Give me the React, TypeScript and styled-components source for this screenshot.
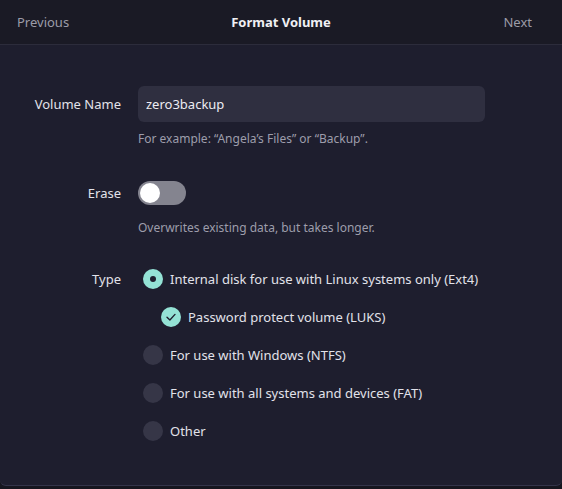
import styled, { createGlobalStyle } from "styled-components";
import React, { useState } from "react";

const GlobalStyle = createGlobalStyle`
  html, body {
    margin: 0;
    padding: 0;
    background: #16161f;
  }
  body {
    font-family: "Noto Sans", "Open Sans", sans-serif;
    -webkit-font-smoothing: antialiased;
  }
`;

const Window = styled.div`
  width: 562px;
  height: 486px;
  display: flex;
  flex-direction: column;
  background: #1e1e2e;
  border-bottom: 1px solid #34344a;
  border-radius: 0 0 6px 6px;
  box-sizing: border-box;
  overflow: hidden;
  color: #e2e2ea;
`;

const HeaderBar = styled.header`
  height: 45px;
  flex-shrink: 0;
  display: grid;
  grid-template-columns: 1fr auto 1fr;
  align-items: center;
  padding: 0 17px;
  background: #1a1a25;
  border-bottom: 1px solid #2c2c3b;
  box-sizing: border-box;
`;

const HeaderButton = styled.span<{ $end?: boolean }>`
  justify-self: ${(p) => (p.$end ? "end" : "start")};
  margin-right: ${(p) => (p.$end ? 13 : 0)}px;
  font-size: 13px;
  color: #9c9ca8;
`;

const Title = styled.h1`
  margin: 0;
  text-align: center;
  font-size: 13px;
  font-weight: 700;
  color: #f0f0f4;
`;

const Content = styled.div`
  display: grid;
  grid-template-columns: 121px 1fr;
  column-gap: 17px;
  padding: 41px 77px 0 0;
  align-items: start;
`;

const Label = styled.div<{ $h: number }>`
  height: ${(p) => p.$h}px;
  display: flex;
  align-items: center;
  justify-content: flex-end;
  font-size: 13px;
`;

const Field = styled.div<{ $mb?: number }>`
  display: flex;
  flex-direction: column;
  margin-bottom: ${(p) => p.$mb ?? 0}px;
`;

const Entry = styled.input`
  height: 36px;
  box-sizing: border-box;
  padding: 0 8px;
  border: 0;
  border-radius: 6px;
  background: #2f2f40;
  color: #ececf2;
  font: inherit;
  font-size: 13px;
  outline: none;
`;

const Hint = styled.div`
  margin-top: 8px;
  font-size: 12px;
  line-height: 17px;
  color: #9d9dab;
`;

const SwitchRow = styled.div`
  height: 36px;
  display: flex;
  align-items: center;
`;

const Switch = styled.button<{ $on: boolean }>`
  width: 48px;
  height: 24px;
  padding: 2px;
  border: 0;
  border-radius: 12px;
  background: ${(p) => (p.$on ? "#94e2d5" : "#84848f")};
  display: flex;
  justify-content: ${(p) => (p.$on ? "flex-end" : "flex-start")};
  cursor: pointer;
`;

const Knob = styled.span`
  width: 20px;
  height: 20px;
  border-radius: 50%;
  background: #ffffff;
`;

const Options = styled.div`
  display: flex;
  flex-direction: column;
`;

const Option = styled.label<{ $indent?: boolean }>`
  height: 38px;
  display: flex;
  align-items: center;
  gap: 7px;
  padding-left: ${(p) => (p.$indent ? 23 : 5)}px;
  font-size: 13px;
  cursor: pointer;
`;

const Radio = styled.span<{ $checked: boolean }>`
  width: 20px;
  height: 20px;
  border-radius: 50%;
  flex-shrink: 0;
  background: ${(p) => (p.$checked ? "#94e2d5" : "#363647")};
  display: flex;
  align-items: center;
  justify-content: center;
`;

const Dot = styled.span`
  width: 6px;
  height: 6px;
  border-radius: 50%;
  background: #1e1e2e;
`;

const CheckMark = () => (
  <svg width="14" height="14" viewBox="0 0 14 14">
    <path
      d="M3 7.2 L5.9 10 L11 4.4"
      fill="none"
      stroke="#1e1e2e"
      strokeWidth="1.4"
      strokeLinecap="round"
      strokeLinejoin="round"
    />
  </svg>
);

const types = [
  "Internal disk for use with Linux systems only (Ext4)",
  "For use with Windows (NTFS)",
  "For use with all systems and devices (FAT)",
  "Other",
];

const App = () => {
  const [name, setName] = useState("zero3backup");
  const [erase, setErase] = useState(false);
  const [type, setType] = useState(0);
  const [luks, setLuks] = useState(true);

  return (
    <>
      <GlobalStyle />
      <Window>
        <HeaderBar>
          <HeaderButton>Previous</HeaderButton>
          <Title>Format Volume</Title>
          <HeaderButton $end>Next</HeaderButton>
        </HeaderBar>
        <Content>
          <Label $h={36}>Volume Name</Label>
          <Field $mb={28}>
            <Entry
              value={name}
              onChange={(e: React.ChangeEvent<HTMLInputElement>) =>
                setName(e.target.value)
              }
            />
            <Hint>For example: “Angela’s Files” or “Backup”.</Hint>
          </Field>
          <Label $h={36}>Erase</Label>
          <Field $mb={24}>
            <SwitchRow>
              <Switch $on={erase} onClick={() => setErase(!erase)}>
                <Knob />
              </Switch>
            </SwitchRow>
            <Hint>Overwrites existing data, but takes longer.</Hint>
          </Field>
          <Label $h={38}>Type</Label>
          <Options>
            {types.map((t, i) => (
              <React.Fragment key={t}>
                <Option onClick={() => setType(i)}>
                  <Radio $checked={type === i}>{type === i && <Dot />}</Radio>
                  {t}
                </Option>
                {i === 0 && (
                  <Option $indent onClick={() => setLuks(!luks)}>
                    <Radio $checked={luks}>{luks && <CheckMark />}</Radio>
                    Password protect volume (LUKS)
                  </Option>
                )}
              </React.Fragment>
            ))}
          </Options>
        </Content>
      </Window>
    </>
  );
};

export default App;
